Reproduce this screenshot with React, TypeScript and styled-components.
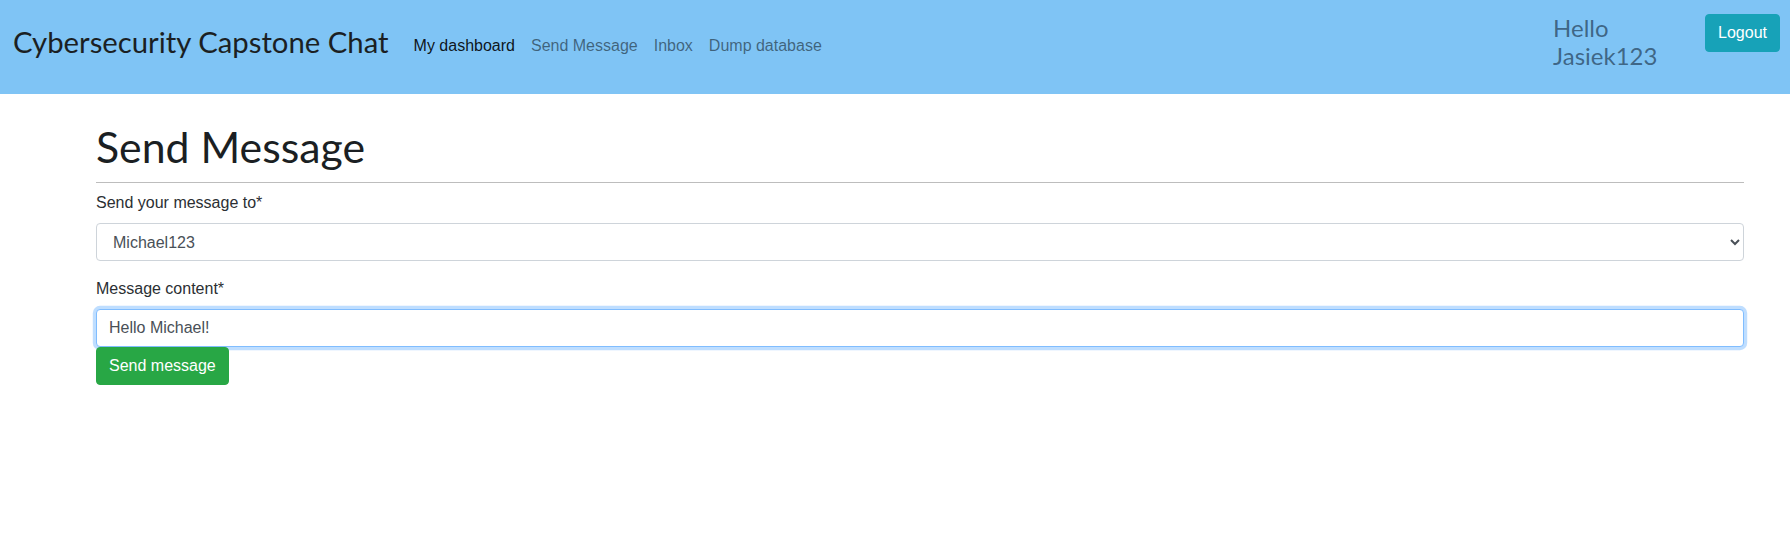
import React from "react";
import styled, { createGlobalStyle } from "styled-components";

const GlobalStyle = createGlobalStyle`
  html, body {
    margin: 0;
    padding: 0;
    background: #ffffff;
  }
  body {
    font-family: "Liberation Sans", Arial, sans-serif;
    font-size: 16px;
    line-height: 24px;
    color: #212529;
  }
  * { box-sizing: border-box; }
`;

const Navbar = styled.nav`
  display: flex;
  align-items: flex-start;
  height: 94px;
  padding: 14px 10px 0 13px;
  background: #7fc4f5;
`;

const Brand = styled.a`
  font-family: Lato, "Open Sans", sans-serif;
  font-size: 29.3px;
  line-height: 34px;
  margin-top: 11px;
  color: #1b1f23;
  text-decoration: none;
  white-space: nowrap;
  margin-right: 17px;
`;

const NavList = styled.ul`
  display: flex;
  list-style: none;
  margin: 20px 0 0 0;
  padding: 0;
`;

const NavLink = styled.a<{ $active?: boolean }>`
  display: block;
  padding: 0 8px;
  font-family: "Liberation Sans", Arial, sans-serif;
  font-size: 16px;
  line-height: 24px;
  color: ${(p) => (p.$active ? "rgba(0,0,0,0.9)" : "rgba(0,0,0,0.5)")};
  text-decoration: none;
  white-space: nowrap;
`;

const Spacer = styled.div`
  flex: 1;
`;

const Greeting = styled.h4`
  width: 136px;
  margin: 0 16px 0 0;
  font-family: Lato, "Open Sans", sans-serif;
  font-weight: 400;
  font-size: 24px;
  line-height: 28px;
  color: rgba(20, 40, 60, 0.62);
`;

const Button = styled.button<{ $variant: "info" | "success" }>`
  display: inline-block;
  font-family: "Liberation Sans", Arial, sans-serif;
  font-size: 16px;
  line-height: 24px;
  padding: 6px 12px;
  border-radius: 4px;
  color: #ffffff;
  cursor: pointer;
  background: ${(p) => (p.$variant === "info" ? "#17a2b8" : "#28a745")};
  border: 1px solid ${(p) => (p.$variant === "info" ? "#17a2b8" : "#28a745")};
`;

const Container = styled.main`
  padding: 28px 46px 0 96px;
`;

const Heading = styled.h1`
  margin: 0;
  font-family: Lato, "Open Sans", sans-serif;
  font-weight: 400;
  font-size: 42.8px;
  line-height: 50px;
  color: #1b1f23;
`;

const Rule = styled.hr`
  margin: 10px 0 8px 0;
  border: 0;
  border-top: 1px solid #bdbdbd;
`;

const FormGroup = styled.div`
  display: flex;
  flex-direction: column;
  margin-bottom: 16px;
`;

const Label = styled.label`
  display: block;
  margin-bottom: 8px;
  font-size: 16px;
  line-height: 24px;
  color: #2b2f33;
`;

const Select = styled.select`
  width: 100%;
  height: 38px;
  padding: 6px 12px;
  font-family: "Liberation Sans", Arial, sans-serif;
  font-size: 16px;
  color: #495057;
  background: #ffffff;
  border: 1px solid #ced4da;
  border-radius: 4px;
`;

const Input = styled.input`
  width: 100%;
  height: 38px;
  padding: 6px 12px;
  font-family: "Liberation Sans", Arial, sans-serif;
  font-size: 16px;
  color: #495057;
  background: #ffffff;
  border: 1px solid #80bdff;
  border-radius: 4px;
  outline: none;
  box-shadow: 0 0 0 3.2px rgba(0, 123, 255, 0.25);
`;

const SubmitRow = styled.div`
  display: flex;
`;

export default function App() {
  return (
    <>
      <GlobalStyle />
      <Navbar>
        <Brand href="#">Cybersecurity Capstone Chat</Brand>
        <NavList>
          <li><NavLink $active href="#">My dashboard</NavLink></li>
          <li><NavLink href="#">Send Message</NavLink></li>
          <li><NavLink href="#">Inbox</NavLink></li>
          <li><NavLink href="#">Dump database</NavLink></li>
        </NavList>
        <Spacer />
        <Greeting>Hello Jasiek123</Greeting>
        <Button $variant="info">Logout</Button>
      </Navbar>
      <Container>
        <Heading>Send Message</Heading>
        <Rule />
        <form onSubmit={(e) => e.preventDefault()}>
          <FormGroup>
            <Label htmlFor="to">Send your message to*</Label>
            <Select id="to" defaultValue="Michael123">
              <option>Michael123</option>
            </Select>
          </FormGroup>
          <Label htmlFor="content">Message content*</Label>
          <Input id="content" defaultValue="Hello Michael!" />
          <SubmitRow>
            <Button $variant="success" type="submit">Send message</Button>
          </SubmitRow>
        </form>
      </Container>
    </>
  );
}
